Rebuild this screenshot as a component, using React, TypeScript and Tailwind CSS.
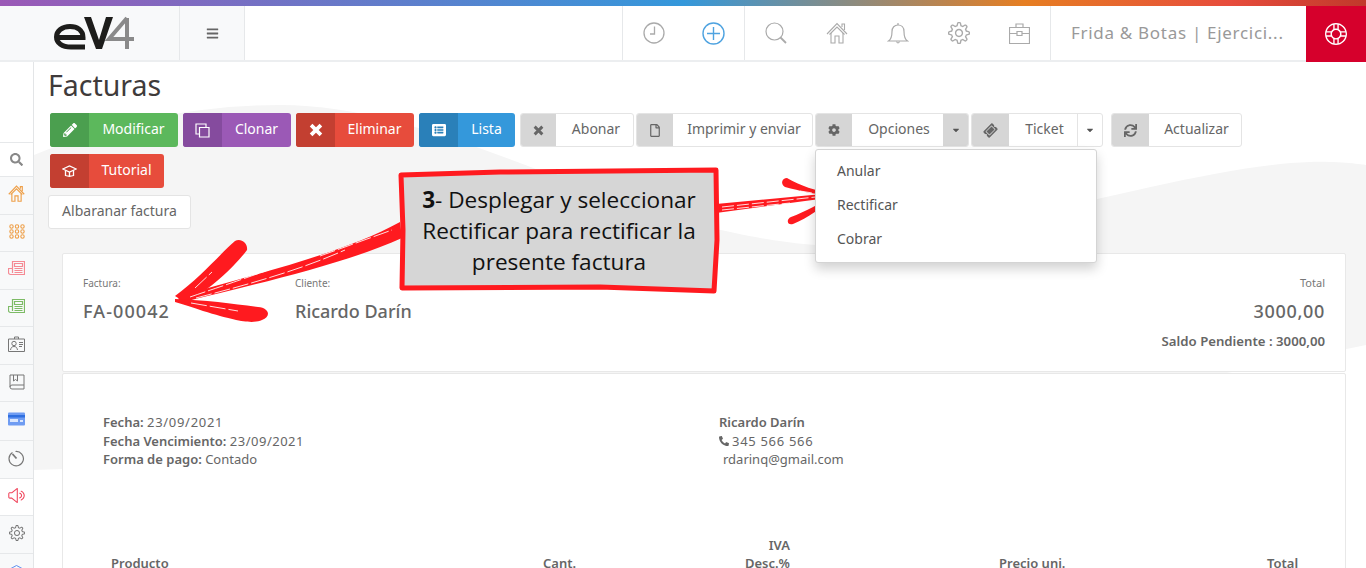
import React from 'react'
import { FaPencilAlt, FaListAlt, FaRegFile, FaCog, FaTicketAlt, FaSync, FaCaretDown, FaSearch, FaPhoneAlt, FaBars } from 'react-icons/fa'
import { SlSettings, SlSupport, SlVolume2 } from 'react-icons/sl'

const appFont = "font-['Noto_Sans',sans-serif]"

const Logo = () => (
  <svg width="90" height="40" viewBox="50 11 90 40" fill="none">
    <path d="M58 35.500H83C83 28 77 24.500 70 24.500C62 24.500 56.500 29 56.500 35C56.500 41 62 45 71 45H85" stroke="#1d1d1b" strokeWidth="5" />
    <path d="M84 15H91L99 38L106 15H113L102 47H96z" fill="#1d1d1b" />
    <path d="M127 16L109 37H134M127 16V47" stroke="#8a8a8a" strokeWidth="4" />
  </svg>
)

const HomeIcon = ({ size, color, sw }: { size: number; color: string; sw: number }) => (
  <svg width={size} height={size} viewBox="0 0 22 22" fill="none" stroke={color} strokeWidth={sw}>
    <path d="M1 12L11 1.500L21 12M3.500 12.500L11 5L18.500 12.500" />
    <path d="M5 11V21H9V14H13V21H17V11M16 5V2H18.500V8" />
  </svg>
)

const ClockIcon = () => (
  <svg width="22" height="22" viewBox="0 0 22 22" fill="none" stroke="#aaa" strokeWidth="1.300">
    <circle cx="11" cy="11" r="10" />
    <path d="M11.500 4.500V12H7" />
  </svg>
)

const PlusIcon = () => (
  <svg width="23" height="23" viewBox="0 0 23 23" fill="none" stroke="#4fa3e0" strokeWidth="1.400">
    <circle cx="11.500" cy="11.500" r="10.500" />
    <path d="M11.500 5V18M5 11.500H18" />
  </svg>
)

const MagnifierIcon = () => (
  <svg width="22" height="22" viewBox="0 0 22 22" fill="none" stroke="#aaa" strokeWidth="1.200">
    <circle cx="9.500" cy="9.500" r="8.500" />
    <path d="M15.500 15.500L21 21" strokeWidth="1.800" />
  </svg>
)

const BellIcon = () => (
  <svg width="22" height="23" viewBox="0 0 22 23" fill="none" stroke="#aaa" strokeWidth="1.200">
    <path d="M1.500 19C4.500 17 5 14 5 9.500C5 5.500 7.500 3 11 3C14.500 3 17 5.500 17 9.500C17 14 17.500 17 20.500 19z" />
    <path d="M11 1V3M9.500 19.500Q11 22.500 12.500 19.500" />
  </svg>
)

const BriefcaseIcon = () => (
  <svg width="21" height="21" viewBox="0 0 21 21" fill="none" stroke="#aaa" strokeWidth="1.200">
    <path d="M.5 4.500H20.500V20.500H.5zM7 4.500V1H14V4.500M.5 10.500H8M13 10.500H20.500M8 8.500H13V12.500H8z" />
  </svg>
)

const XIcon = ({ size, w }: { size: number; w: number }) => (
  <svg width={size} height={size} viewBox="0 0 12 12" fill="none" stroke="currentColor" strokeWidth={w}>
    <path d="M1.800 1.800L10.200 10.200M10.200 1.800L1.800 10.200" />
  </svg>
)

const CloneIcon = () => (
  <svg width="15" height="15" viewBox="0 0 15 15" fill="none" stroke="currentColor" strokeWidth="1.200">
    <path d="M4.500 4.500H14V14H4.500zM4 11H1V1H11V4" />
  </svg>
)

const CapIcon = () => (
  <svg width="15" height="14" viewBox="0 0 15 14" fill="none" stroke="currentColor" strokeWidth="1.300">
    <path d="M.8 5L7.500 2L14.200 5L7.500 8z" />
    <path d="M3.500 6.500V11.500Q7.500 13 11.500 11.500V6.500M7.500 8V12" />
  </svg>
)

const NewsIcon = ({ color }: { color: string }) => (
  <svg width="17" height="16" viewBox="0 0 17 16" fill="none" stroke={color} strokeWidth="1.200">
    <path d="M4.500 13V1.500h12V14.500H2.500a2 2 0 0 1-2-2V8.500h4" />
    <path d="M6.500 3.500h8v3h-8zM6.500 8.500h8M6.500 10.500h8M6.500 12.500h8" />
  </svg>
)

const DotsIcon = () => (
  <svg width="16" height="15" viewBox="0 0 16 15" fill="none" stroke="#eea04a" strokeWidth="1.100">
    {[2.5, 7.5, 12.5].map((y) =>
      [2.5, 8, 13.5].map((x) => <circle key={`${x}-${y}`} cx={x} cy={y} r="1.700" />)
    )}
  </svg>
)

const BadgeIcon = () => (
  <svg width="17" height="17" viewBox="0 0 17 17" fill="none" stroke="#777" strokeWidth="1">
    <path d="M.5 3h16v12.500H.5zM6.500 3V1h4v2" />
    <circle cx="6" cy="7.500" r="2.200" />
    <path d="M2.500 14c.5-2.500 1.500-3.500 3.500-3.500s3 1 3.500 3.500M11 6.500h4M11 8.500h4M11 10.500h3" />
  </svg>
)

const BookIcon = () => (
  <svg width="16" height="16" viewBox="0 0 16 16" fill="none" stroke="#777" strokeWidth="1">
    <path d="M1 13V1h14v14H3a2 2 0 0 1-2-2 2 2 0 0 1 2-2h12M4.500 1v6l2-1.500 2 1.500V1" />
  </svg>
)

const CardIcon = () => (
  <svg width="17" height="14" viewBox="0 0 17 14">
    <rect width="17" height="13" y=".5" rx="1" fill="#6f9cf2" />
    <rect y="3" width="17" height="2.500" fill="#2f6fe0" />
    <rect x="2" y="7" width="8" height="3" fill="#dbe7fd" />
    <rect x="12" y="8" width="3" height="2" fill="#dbe7fd" />
  </svg>
)

const TimerIcon = () => (
  <svg width="17" height="17" viewBox="0 0 17 17" fill="none" stroke="#777" strokeWidth="1.200">
    <path d="M4.500 2.500a7.200 7.200 0 1 0 3-1" />
    <path d="M4.500 4l4 4.500" strokeWidth="1.800" />
  </svg>
)

const HexIcon = () => (
  <svg width="17" height="17" viewBox="0 0 17 17" fill="none" stroke="#5b8def" strokeWidth="1">
    <path d="M1 5.500l7.500-4 7.500 4v7l-7.500 4-7.500-4z" />
  </svg>
)

const sideRows: { el: React.ReactNode; h: string; bg: string }[] = [
  { el: <FaSearch className="w-[13px] h-[13px] text-[#888]" />, h: 'h-[34px]', bg: 'bg-white' },
  { el: <HomeIcon size={17} color="#eea04a" sw={1.500} />, h: 'h-[38px] pb-[4px]', bg: 'bg-[#f8f9fa]' },
  { el: <DotsIcon />, h: 'h-[37px] pb-[3px]', bg: 'bg-[#f8f9fa]' },
  { el: <NewsIcon color="#f58a94" />, h: 'h-[38px] pb-[5px]', bg: 'bg-[#f8f9fa]' },
  { el: <NewsIcon color="#7dbb66" />, h: 'h-[37px] pb-[5px]', bg: 'bg-[#f8f9fa]' },
  { el: <BadgeIcon />, h: 'h-[38px] pb-[3px]', bg: 'bg-[#f8f9fa]' },
  { el: <BookIcon />, h: 'h-[37px] pb-[3px]', bg: 'bg-[#f8f9fa]' },
  { el: <CardIcon />, h: 'h-[39px] pb-[5px]', bg: 'bg-[#f8f9fa]' },
  { el: <TimerIcon />, h: 'h-[38px] pb-[3px]', bg: 'bg-[#f8f9fa]' },
  { el: <SlVolume2 className="w-[17px] h-[17px] text-[#f0455c]" />, h: 'h-[37px] pb-[3px]', bg: 'bg-white' },
  { el: <SlSettings className="w-[16px] h-[16px] text-[#777]" />, h: 'h-[38px] pb-[3px]', bg: 'bg-[#f8f9fa]' },
  { el: <HexIcon />, h: 'h-[38px]', bg: 'bg-[#f8f9fa]' },
]

const ColorBtn = ({ icon, label, w, dark, light }: { icon: React.ReactNode; label: string; w: string; dark: string; light: string }) => (
  <div className={`flex h-[34px] rounded-[3px] overflow-hidden text-white text-[14px] ${w} ${light}`}>
    <span className={`w-[39px] flex items-center justify-center shrink-0 ${dark}`}>{icon}</span>
    <span className="flex-1 flex items-center justify-center pb-[4px]">{label}</span>
  </div>
)

const GrayBtn = ({ icon, label, w, iconW, caret }: { icon: React.ReactNode; label: string; w: string; iconW: string; caret?: 'gray' | 'white' }) => (
  <div className={`flex h-[34px] rounded-[3px] overflow-hidden bg-white border border-[#e4e4e4] text-[#666] text-[14px] ${w}`}>
    <span className={`flex items-center justify-center shrink-0 bg-[#d6d6d6] text-[#666] -my-px -ml-px ${iconW}`}>{icon}</span>
    <span className="flex-1 flex items-center justify-center pb-[4px] pl-[3px]">{label}</span>
    {caret === 'gray' && (
      <span className="w-[26px] flex items-center justify-center bg-[#d6d6d6] -my-px -mr-px">
        <FaCaretDown className="w-[10px] h-[10px] text-[#555]" />
      </span>
    )}
    {caret === 'white' && (
      <span className="w-[25px] flex items-center justify-center border-l border-[#e4e4e4]">
        <FaCaretDown className="w-[10px] h-[10px] text-[#555]" />
      </span>
    )}
  </div>
)

const Annotation = () => (
  <>
    <svg className="absolute left-0 top-0 pointer-events-none" width="1366" height="568" viewBox="0 0 1366 568" fill="none">
      {/* left arrow */}
      <path d="M400 222 C340 255 250 275 178 297 L180 303 C250 285 340 266 402 238z" fill="#ff1a1f" />
      <path d="M175 296 C200 278 222 252 235 241 C241 238 248 243 247 250 C236 265 212 288 186 303z" fill="#ff1a1f" />
      <path d="M175 299 C205 300 235 304 258 307 C270 308 271 317 262 320 C252 324 240 322 203 311 C195 308 185 305 175 302z" fill="#ff1a1f" />
      <path d="M190 297 C240 280 270 270 305 256 M196 298 C250 284 300 270 345 250 M320 256 L392 230 M191 303 L238 311 M195 288 L212 272" stroke="#fff" strokeWidth="1" strokeDasharray="16 3" opacity=".85" />
      {/* right arrow */}
      <path d="M716 204 L833 193 L835 197 L716 213z" fill="#ff1a1f" />
      <path d="M835 195 C815 190 800 186 787 178 C782 178 780 184 785 187 C800 191 815 194 833 197z" fill="#ff1a1f" />
      <path d="M835 195 C820 203 805 212 791 217 C786 219 787 226 793 224 C808 218 822 207 836 197z" fill="#ff1a1f" />
      <path d="M722 207 L825 196 M722 210 L790 203 M800 191 L825 195" stroke="#fff" strokeWidth="1" strokeDasharray="12 3" opacity=".85" />
      {/* callout */}
      <path d="M401 175 L500 172 L716 170 L717 240 L714 291 L600 287 L402 288 L403 230z" fill="#d6d6d6" stroke="#ff1a1f" strokeWidth="5" strokeLinejoin="round" />
    </svg>
    <div className="absolute left-[404px] top-[184px] w-[310px] text-center text-[22.600px] leading-[31px] text-[#111] font-['Open_Sans',sans-serif]">
      <b>3</b>- Desplegar y seleccionar Rectificar para rectificar la presente factura
    </div>
  </>
)

export default function App() {
  return (
    <div className={`relative h-[568px] w-[1366px] overflow-hidden bg-white flex flex-col ${appFont}`}>
      <div className="h-[6px] shrink-0 bg-[linear-gradient(90deg,#9b59b6_0%,#3498db_50%,#e67e22_75%,#e74c3c_90%,#c0392b_100%)]" />
      <header className="h-[56px] shrink-0 flex border-b-2 border-[#eceef0] text-[#999]">
        <div className="w-[180px] bg-[#f8f9fa] border-r border-[#e6e8ea] flex items-center pl-[50px]">
          <Logo />
        </div>
        <div className="w-[65px] bg-[#f8f9fa] border-r border-[#e6e8ea] flex items-center justify-center">
          <FaBars className="w-[13px] h-[13px] text-[#666]" />
        </div>
        <div className="flex-1" />
        <div className="w-[122px] border-l border-[#e6e8ea] flex items-center justify-around px-[1px]">
          <ClockIcon />
          <PlusIcon />
        </div>
        <div className="w-[306px] border-l border-[#e6e8ea] flex items-center justify-between pl-[20px] pr-[20px]">
          <MagnifierIcon />
          <HomeIcon size={22} color="#aaa" sw={1.100} />
          <BellIcon />
          <SlSettings className="w-[22px] h-[22px] text-[#aaa]" />
          <BriefcaseIcon />
        </div>
        <div className="w-[256px] border-l border-[#e6e8ea] flex items-center pl-[20px] text-[17px] tracking-[0.700px] text-[#999] whitespace-nowrap">
          Frida &amp; Botas | Ejercici...
        </div>
        <div className="w-[60px] -mb-[2px] bg-[#d6002c] flex items-center justify-center">
          <SlSupport className="w-[22px] h-[22px] text-white" />
        </div>
      </header>

      <div className="flex flex-1 min-h-0 relative">
        <svg className="absolute left-0 top-[-62px]" width="1366" height="568" viewBox="0 0 1366 568">
          <path d="M34 155 C120 120 200 105 280 105 C420 105 560 190 700 225 C780 245 830 248 870 245 C1000 230 1200 165 1310 162 C1340 161 1366 165 1366 165 L1366 345 C1100 400 900 440 34 470z" fill="#f5f5f5" />
        </svg>
        <aside className="relative w-[34px] shrink-0 border-r border-[#e3e5e7] pt-[80px] bg-white">
          {sideRows.map((r, i) => (
            <div key={i} className={`flex items-center justify-center border-t border-[#e6e8ea] ${r.h} ${r.bg}`}>
              {r.el}
            </div>
          ))}
        </aside>

        <main className="relative flex-1 pl-[14px] pr-[20px]">
          <h1 className="text-[28.500px] leading-[38px] text-[#3f3b3b] mt-[4px]">Facturas</h1>
          <div className="flex mt-[9px] ml-[2px]">
            <ColorBtn icon={<FaPencilAlt className="w-[14px] h-[14px]" />} label="Modificar" w="w-[128px] mr-[5px]" dark="bg-[#4b9f4f]" light="bg-[#5cb85c]" />
            <ColorBtn icon={<CloneIcon />} label="Clonar" w="w-[108px] mr-[5px]" dark="bg-[#854b9e]" light="bg-[#9b59b6]" />
            <ColorBtn icon={<XIcon size={14} w={3.200} />} label="Eliminar" w="w-[118px] mr-[5px]" dark="bg-[#c33f31]" light="bg-[#e74c3c]" />
            <ColorBtn icon={<FaListAlt className="w-[14px] h-[14px]" />} label="Lista" w="w-[96px] mr-[5px]" dark="bg-[#2a80b9]" light="bg-[#3498db]" />
            <GrayBtn icon={<XIcon size={11} w={3.200} />} label="Abonar" w="w-[114px] mr-[2px]" iconW="w-[36px]" />
            <GrayBtn icon={<FaRegFile className="w-[12px] h-[13px]" />} label="Imprimir y enviar" w="w-[177px] mr-[2px]" iconW="w-[37px]" />
            <div className="relative mr-[2px]">
              <GrayBtn icon={<FaCog className="w-[12px] h-[12px]" />} label="Opciones" w="w-[154px]" iconW="w-[37px]" caret="gray" />
              <div className="absolute left-0 top-[36px] z-10 w-[282px] h-[114px] py-[5px] bg-white border border-[#d4d4d4] rounded-[3px] shadow-[0_6px_12px_rgba(0,0,0,0.18)] text-[14px] text-[#555]">
                <div className="h-[34px] flex items-center pl-[21px] pb-[4px]">Anular</div>
                <div className="h-[34px] flex items-center pl-[21px] pb-[4px]">Rectificar</div>
                <div className="h-[34px] flex items-center pl-[21px] pb-[4px]">Cobrar</div>
              </div>
            </div>
            <GrayBtn icon={<FaTicketAlt className="w-[13px] h-[13px] -rotate-45" />} label="Ticket" w="w-[132px] mr-[8px]" iconW="w-[38px]" caret="white" />
            <GrayBtn icon={<FaSync className="w-[13px] h-[13px]" />} label="Actualizar" w="w-[131px]" iconW="w-[38px]" />
          </div>
          <div className="flex mt-[7px] ml-[2px]">
            <ColorBtn icon={<CapIcon />} label="Tutorial" w="w-[114px]" dark="bg-[#c33f31]" light="bg-[#e74c3c]" />
          </div>
          <div className="mt-[7px] w-[143px] h-[34px] pb-[4px] flex items-center justify-center bg-white border border-[#e4e4e4] rounded-[3px] text-[14px] text-[#666]">
            Albaranar factura
          </div>

          <section className="mt-[24px] ml-[14px] h-[119px] bg-white border border-[#e8e8e8] rounded-[2px] px-[20px] pt-[22px] flex text-[#666]">
            <div className="w-[212px]">
              <div className="text-[10px] leading-[14px] text-[#777]">Factura:</div>
              <div className="mt-[9px] text-[18px] leading-[24px] font-medium tracking-[1.100px]">FA-00042</div>
            </div>
            <div className="flex-1">
              <div className="text-[10px] leading-[14px] text-[#777]">Cliente:</div>
              <div className="mt-[9px] text-[18px] leading-[24px] font-medium">Ricardo Darín</div>
            </div>
            <div className="text-right">
              <div className="text-[11px] leading-[14px] text-[#777]">Total</div>
              <div className="mt-[9px] text-[18px] leading-[24px] font-medium tracking-[0.700px]">3000,00</div>
              <div className="mt-[9px] text-[13.200px] leading-[18px] font-semibold">Saldo Pendiente : 3000,00</div>
            </div>
          </section>

          <section className="mt-[1px] ml-[14px] h-[300px] bg-white border border-[#e8e8e8] rounded-[2px] text-[13px] text-[#666]">
            <div className="flex pl-[40px] pt-[39px] leading-[18.500px]">
              <div className="w-[616px]">
                <div><span className="font-semibold">Fecha:</span> <span className="tracking-[0.700px]">23/09/2021</span></div>
                <div><span className="font-semibold">Fecha Vencimiento:</span> <span className="tracking-[0.500px]">23/09/2021</span></div>
                <div><span className="font-semibold">Forma de pago:</span> Contado</div>
              </div>
              <div>
                <div className="font-semibold">Ricardo Darín</div>
                <div className="flex items-center gap-[3px]"><FaPhoneAlt className="w-[10px] h-[10px]" /><span className="tracking-[0.700px]">345 566 566</span></div>
                <div className="pl-[4px]">rdarinq@gmail.com</div>
              </div>
            </div>
            <div className="mt-[67px] ml-[48px] grid grid-cols-[432px_201px_255px_268px_auto] font-semibold leading-[18px] items-end">
              <div>Producto</div>
              <div>Cant.</div>
              <div className="text-right w-[46px]">IVA<br />Desc.%</div>
              <div>Precio uni.</div>
              <div>Total</div>
            </div>
          </section>
        </main>
      </div>

      <Annotation />
    </div>
  )
}
